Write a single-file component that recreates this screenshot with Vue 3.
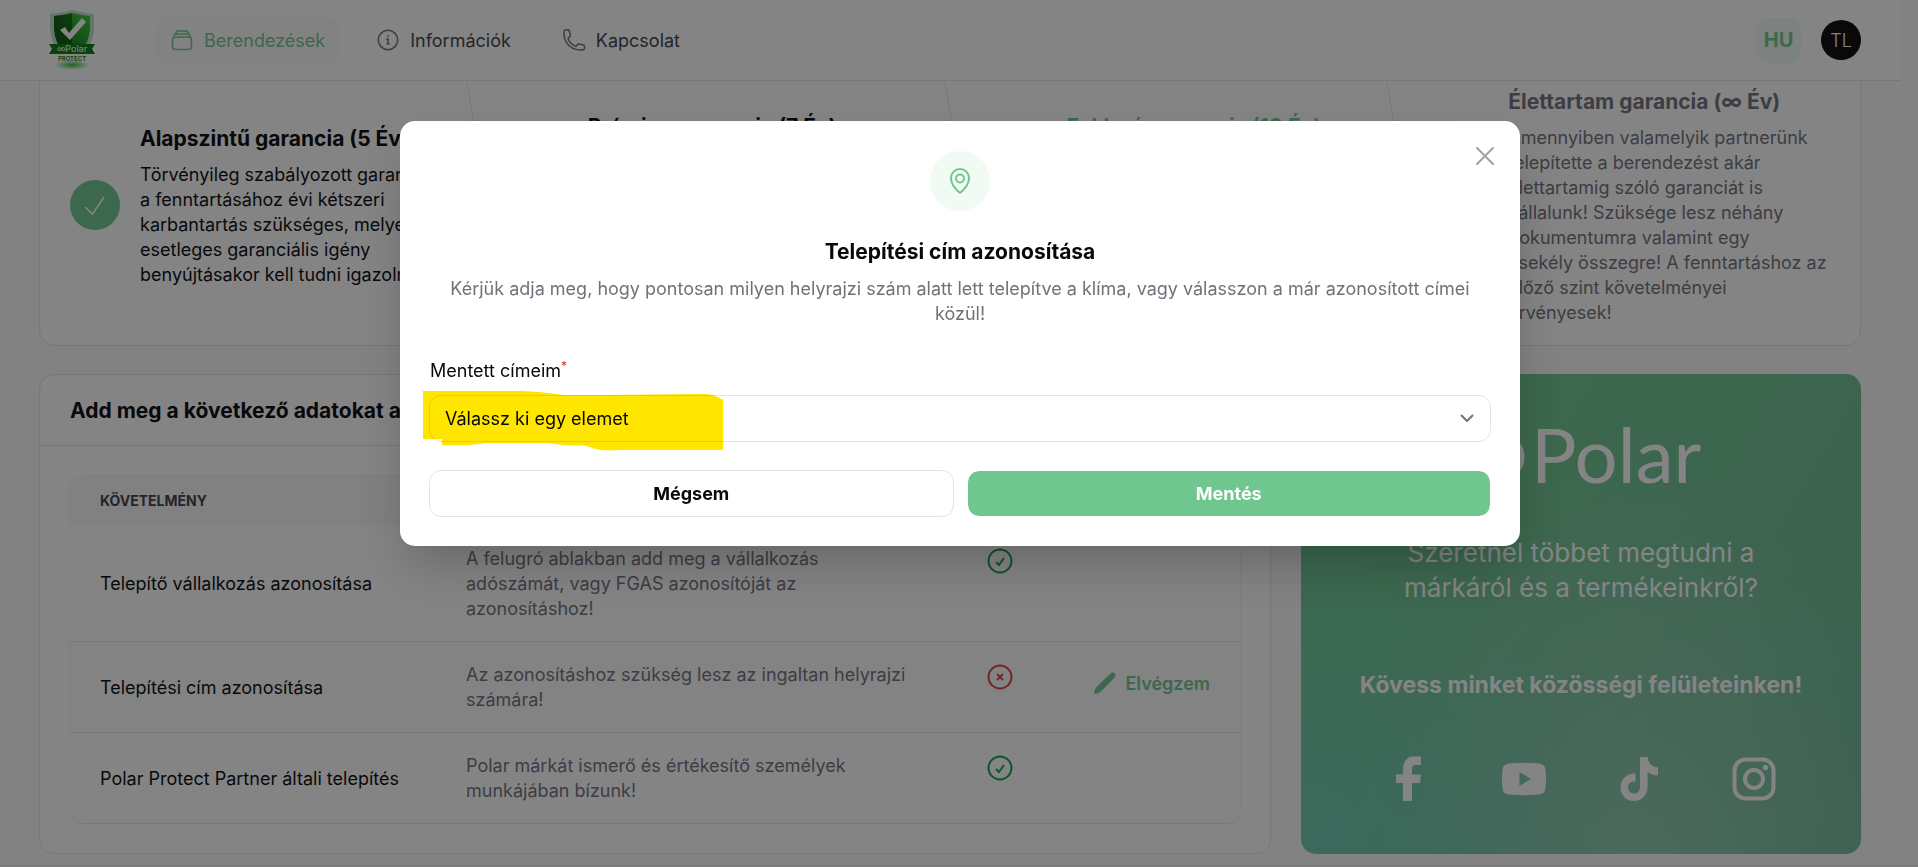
<template>
  <div class="page">
    <header class="topbar">
      <a class="brand" href="#" aria-label="Polar Protect">
        <svg width="52" height="60" viewBox="0 0 52 60">
          <defs>
            <linearGradient id="shieldFill" x1="0" x2="1" y1="1" y2="0">
              <stop offset="0" stop-color="#005a00" />
              <stop offset="1" stop-color="#3ccf3c" />
            </linearGradient>
            <radialGradient id="glow">
              <stop offset="0" stop-color="#37c437" />
              <stop offset="1" stop-color="#37c437" stop-opacity="0" />
            </radialGradient>
          </defs>
          <ellipse cx="26" cy="55" rx="18" ry="5" fill="url(#glow)" />
          <path d="M4 4Q15 3 26 0Q37 3 48 4V19Q47 33 38 43H14Q5 33 4 19Z" fill="#bfe3c6" />
          <path d="M8 6Q18 5 26 3Q34 5 44 6V19Q43 33 34 43H18Q9 33 8 19Z" fill="url(#shieldFill)" />
          <path d="M8 6Q18 5 26 3V43H18Q9 33 8 19Z" fill="#003c00" opacity=".55" />
          <path d="M14 20L19 17L23 23L36 8L40 12L24 30Z" fill="#fff" />
          <path d="M3 34H49L46 39L49 44H3L6 39Z" fill="#067a0c" />
          <text x="26" y="42" text-anchor="middle" class="brand-name">∞Polar</text>
          <text x="26" y="51" text-anchor="middle" class="brand-sub">PROTECT</text>
        </svg>
      </a>
      <nav class="nav">
        <a class="nav-item active" href="#">
          <svg class="nav-icon" viewBox="0 0 24 24">
            <rect x="2.5" y="9" width="19" height="12.5" rx="3" />
            <path d="M4 9V8Q4 6 6 6H18Q20 6 20 8V9M6 6V5Q6 3 8 3H16Q18 3 18 5V6" />
          </svg>
          Berendezések
        </a>
        <a class="nav-item" href="#">
          <svg class="nav-icon" viewBox="0 0 24 24">
            <circle cx="12" cy="12" r="9.7" />
            <path d="M10.5 11H12.2L11.5 16H13.2M12 7.6V8.2" />
          </svg>
          Információk
        </a>
        <a class="nav-item" href="#">
          <svg class="nav-icon" viewBox="0 0 24 24">
            <path d="M2 5.5C2 15 9 22 18.500 22H20.500A2 2 0 0 0 22.500 20V18.300C22.500 17.700 22.100 17.200 21.500 17L17 15.900C16.500 15.800 16 16 15.700 16.400L14.700 17.700C14.400 18.100 13.900 18.200 13.500 18.100A12 12 0 0 1 6.200 10.800C6 10.400 6.200 9.900 6.600 9.600L7.900 8.600C8.300 8.300 8.500 7.800 8.400 7.300L7.300 2.800C7.200 2.200 6.600 1.800 6 1.800H4.300A2.200 2.200 0 0 0 2 4Z" />
          </svg>
          Kapcsolat
        </a>
      </nav>
      <div class="account">
        <button class="lang" type="button">HU</button>
        <button class="avatar" type="button">TL</button>
      </div>
    </header>

    <main class="content">
      <ol class="levels">
        <li v-for="(level, index) in levels" :key="level.title" class="level" :class="level.state">
          <span class="level-mark">
            <svg v-if="level.done" width="24" height="24" viewBox="0 0 24 24">
              <path d="M2 14L9.500 21L21 4" />
            </svg>
          </span>
          <div>
            <h3 class="level-title">{{ level.title }}</h3>
            <p class="level-text">{{ level.text }}</p>
          </div>
          <svg
            v-if="index < levels.length - 1"
            class="level-arrow"
            viewBox="0 0 24 282"
            preserveAspectRatio="none"
          >
            <path d="M0 0L23 141L0 282" />
          </svg>
        </li>
      </ol>

      <div class="columns">
        <section class="card">
          <h2 class="card-title">Add meg a következő adatokat a garancia eléréséhez</h2>
          <div class="table-wrap">
            <table class="table">
              <colgroup>
                <col class="col-name" />
                <col class="col-text" />
                <col class="col-status" />
                <col />
              </colgroup>
              <thead>
                <tr>
                  <th>KÖVETELMÉNY</th>
                  <th>LEÍRÁS</th>
                  <th></th>
                  <th></th>
                </tr>
              </thead>
              <tbody>
                <tr v-for="row in rows" :key="row.name">
                  <td class="name">{{ row.name }}</td>
                  <td class="text">{{ row.text }}</td>
                  <td class="status">
                    <svg :class="row.ok ? 'ok' : 'bad'" width="26" height="26" viewBox="0 0 26 26">
                      <circle cx="13" cy="13" r="11.500" />
                      <path v-if="row.ok" d="M9 14L12 17L17 10" />
                      <path v-else d="M10 10L16 16M16 10L10 16" />
                    </svg>
                  </td>
                  <td class="action">
                    <button v-if="!row.ok" class="link-button" type="button">
                      <svg width="22" height="22" viewBox="0 0 22 22">
                        <path d="M0 22Q0 18 2 15.500L16.500 1.500Q18.500 -0.500 20.500 1.500Q22.500 3.500 20.500 5.500L7 19.500Q4.500 21.500 0 22Z" />
                      </svg>
                      Elvégzem
                    </button>
                  </td>
                </tr>
              </tbody>
            </table>
          </div>
        </section>

        <aside class="promo">
          <svg class="promo-logo" width="242" height="64" viewBox="0 0 242 64">
            <ellipse cx="19" cy="36" rx="14" ry="17" />
            <ellipse cx="47" cy="36" rx="14" ry="17" />
            <text x="71" y="62">Polar</text>
          </svg>
          <p class="promo-text">Szeretnél többet megtudni a<br />márkáról és a termékeinkről?</p>
          <p class="promo-follow">Kövess minket közösségi felületeinken!</p>
          <div class="socials">
            <a href="#" aria-label="Facebook">
              <svg viewBox="0 0 48 48">
                <path d="M18 46V28H11V19.500H18V15C18 6 22 1.500 29 1.500H36V10H31C28 10 27 11.500 27 14.500V19.500H36L35 28H27V46Z" />
              </svg>
            </a>
            <a href="#" aria-label="YouTube">
              <svg viewBox="0 0 48 48">
                <path fill-rule="evenodd" d="M9 8.500Q24 7 39 8.500Q45 9 45.500 15Q46.500 24 45.500 33Q45 39 39 39.500Q24 41 9 39.500Q3 39 2.500 33Q1.500 24 2.500 15Q3 9 9 8.500ZM19.500 17V31L31 24Z" />
              </svg>
            </a>
            <a href="#" aria-label="TikTok">
              <svg viewBox="0 0 48 48">
                <path d="M25 2H32.500C33 8 37 12 43 12.500V20.500C39 20.500 35.500 19 32.500 17V32C32.500 40 26.500 46 19 46C11 46 5.500 40 5.500 32.500C5.500 24.500 12 18 20.500 18.500V26.500C16 26 13 28.500 13 32.300C13 36 15.500 38.500 19 38.500C22.500 38.500 25 36 25 32Z" />
              </svg>
            </a>
            <a href="#" aria-label="Instagram">
              <svg viewBox="0 0 48 48">
                <rect class="line" x="4.500" y="4.500" width="39" height="39" rx="11" />
                <circle class="line" cx="24" cy="24" r="9" />
                <circle cx="35.500" cy="12.500" r="2.800" />
              </svg>
            </a>
          </div>
        </aside>
      </div>
    </main>
    <footer class="footer"></footer>

    <div class="backdrop">
      <form class="modal" role="dialog" aria-labelledby="modal-title" @submit.prevent>
        <button class="close" type="button" aria-label="Bezárás">
          <svg width="18" height="18" viewBox="0 0 18 18">
            <path d="M1 1L17 17M17 1L1 17" />
          </svg>
        </button>
        <span class="modal-icon">
          <svg width="26" height="26" viewBox="0 0 26 26">
            <path d="M13 25C10 22.500 4 17 4 10A9 9 0 0 1 22 10C22 17 16 22.500 13 25Z" />
            <circle cx="13" cy="10.500" r="4" />
          </svg>
        </span>
        <h2 id="modal-title" class="modal-title">Telepítési cím azonosítása</h2>
        <p class="modal-text">
          Kérjük adja meg, hogy pontosan milyen helyrajzi szám alatt lett telepítve a klíma, vagy válasszon a már azonosított címei közül!
        </p>
        <label class="field-label" for="address">Mentett címeim<sup>*</sup></label>
        <div class="field">
          <select id="address" v-model="address">
            <option value="">Válassz ki egy elemet</option>
          </select>
          <svg class="chevron" width="14" height="8" viewBox="0 0 14 8">
            <path d="M1 1L7 7L13 1" />
          </svg>
          <svg class="marker" width="300" height="60" viewBox="0 0 300 60">
            <path d="M0 0H100Q122 1 141 4H181L280 3Q292 3 300 9V59H198Q180 60 173 58C166 56 164 54 153 54.500Q138 54 123 52H63Q50 54 41 54H19V48H0Z" />
          </svg>
        </div>
        <div class="modal-actions">
          <button class="btn btn-outline" type="button">Mégsem</button>
          <button class="btn btn-primary" type="submit">Mentés</button>
        </div>
      </form>
    </div>
  </div>
</template>

<script setup>
import { ref } from 'vue'

const address = ref('')

const levels = [
  {
    title: 'Alapszintű garancia (5 Év)',
    text: 'Törvényileg szabályozott garancia,\na fenntartásához évi kétszeri\nkarbantartás szükséges, melyet\nesetleges garanciális igény\nbenyújtásakor kell tudni igazolni!',
    state: 'done',
    done: true,
  },
  {
    title: 'Prémium garancia (7 Év)',
    text: 'Amennyiben minden adatot\nmegad a berendezésről,\nkét évvel hosszabb\ngaranciát vállalunk.\nA fenntartáshoz az előző szint\nkövetelményei érvényesek!',
    state: 'done',
    done: true,
  },
  {
    title: 'Exkluzív garancia (10 Év)',
    text: 'Amennyiben partnerünk\ntelepítette a berendezést,\ntíz év garanciát\nvállalunk.\nA fenntartáshoz az előző szint\nkövetelményei érvényesek!',
    state: 'current',
    done: false,
  },
  {
    title: 'Élettartam garancia (∞ Év)',
    text: 'Amennyiben valamelyik partnerünk\ntelepítette a berendezést akár\nélettartamig szóló garanciát is\nvállalunk! Szüksége lesz néhány\ndokumentumra valamint egy\ncsekély összegre! A fenntartáshoz az\nelőző szint követelményei\nérvényesek!',
    state: 'upcoming',
    done: false,
  },
]

const rows = [
  {
    name: 'Telepítő vállalkozás azonosítása',
    text: 'A felugró ablakban add meg a vállalkozás\nadószámát, vagy FGAS azonosítóját az\nazonosításhoz!',
    ok: true,
  },
  {
    name: 'Telepítési cím azonosítása',
    text: 'Az azonosításhoz szükség lesz az ingaltan helyrajzi\nszámára!',
    ok: false,
  },
  {
    name: 'Polar Protect Partner általi telepítés',
    text: 'Polar márkát ismerő és értékesítő személyek\nmunkájában bízunk!',
    ok: true,
  },
]
</script>

<style>
body {
  margin: 0;
  overflow: hidden;
  background: #fafafa;
}
</style>

<style scoped>
.page {
  box-sizing: border-box;
  min-height: 100vh;
  padding-right: 17px;
  background: #fafafa;
  color: #09090b;
  font-family: Inter, sans-serif;
  font-size: 18px;
  line-height: 25px;
}
.page *,
.page *::before {
  box-sizing: border-box;
}
h2,
h3,
p,
ol {
  margin: 0;
  padding: 0;
}
a {
  color: inherit;
  text-decoration: none;
}
button,
select {
  font: inherit;
  color: inherit;
  cursor: pointer;
}
svg {
  display: block;
  flex-shrink: 0;
}

/* top bar */
.topbar {
  position: fixed;
  top: 0;
  left: 0;
  right: 17px;
  z-index: 10;
  display: flex;
  align-items: center;
  height: 81px;
  padding: 0 40px 0 46px;
  background: #fff;
  border-bottom: 1px solid #e4e4e7;
}
.brand-name {
  fill: #fff;
  font-size: 9px;
}
.brand-sub {
  fill: #067a0c;
  font-size: 6px;
  font-weight: 600;
}
.nav {
  display: flex;
  gap: 21px;
  margin-left: 57px;
}
.nav-item {
  display: flex;
  align-items: center;
  gap: 10px;
  height: 45px;
  padding: 0 15px;
  border-radius: 12px;
  color: #3f3f46;
}
.nav-icon {
  width: 24px;
  height: 24px;
  fill: none;
  stroke: #71717a;
  stroke-width: 1.5;
  stroke-linecap: round;
  stroke-linejoin: round;
}
.nav-item.active {
  background: #fafafa;
  color: #6fc78f;
}
.nav-item.active .nav-icon {
  stroke: #6fc78f;
}
.account {
  display: flex;
  align-items: center;
  gap: 20px;
  margin-left: auto;
}
.lang {
  width: 45px;
  height: 45px;
  padding: 0;
  border: 0;
  border-radius: 12px;
  background: #eefaf2;
  color: #6fc78f;
  font-size: 20px;
  font-weight: 700;
}
.avatar {
  width: 40px;
  height: 40px;
  padding: 0;
  border: 0;
  border-radius: 50%;
  background: #09090b;
  color: #fff;
  font-weight: 300;
}

/* warranty levels */
.content {
  padding: 63px 40px 11px 39px;
}
.levels {
  display: grid;
  grid-template-columns: 448fr 479fr 442fr 452fr;
  min-height: 283px;
  list-style: none;
  background: #fff;
  border: 1px solid #e4e4e7;
  border-radius: 15px;
}
.level {
  position: relative;
  display: flex;
  align-items: center;
  gap: 20px;
  padding: 20px 0 20px 30px;
}
.level-mark {
  display: flex;
  flex-shrink: 0;
  align-items: center;
  justify-content: center;
  width: 50px;
  height: 50px;
  border: 2px solid #d4d4d8;
  border-radius: 50%;
}
.level-mark path {
  fill: none;
  stroke: #fff;
  stroke-width: 1.5;
}
.done .level-mark {
  border-color: #6fc78f;
  background: #6fc78f;
}
.level-title {
  margin-bottom: 8px;
  padding-top: 2px;
  font-size: 21px;
  font-weight: 700;
  line-height: 30px;
  white-space: nowrap;
}
.level-text {
  white-space: pre;
}
.current .level-title {
  color: #6fc78f;
}
.upcoming {
  color: #71717a;
}
.level-arrow {
  position: absolute;
  top: 0;
  right: 0;
  width: 24px;
  height: 100%;
}
.level-arrow path {
  fill: none;
  stroke: #e4e4e7;
}

/* requirements */
.columns {
  display: grid;
  grid-template-columns: 11fr 5fr;
  gap: 30px;
  margin-top: 28px;
}
.card {
  background: #fff;
  border: 1px solid #e4e4e7;
  border-radius: 15px;
}
.card-title {
  padding: 21px 30px 19px;
  border-bottom: 1px solid #e4e4e7;
  font-size: 21px;
  font-weight: 700;
  line-height: 30px;
}
.table-wrap {
  margin: 29px;
  overflow: hidden;
  border: 1px solid #f4f4f5;
  border-bottom-color: #e4e4e7;
  border-radius: 15px;
}
.table {
  width: 100%;
  border-collapse: collapse;
  table-layout: fixed;
}
.col-name {
  width: 366px;
}
.col-text {
  width: 521px;
}
.col-status {
  width: 90px;
}
th {
  height: 50px;
  padding: 0 30px 2px;
  background: #f8f8f9;
  color: #3f3f46;
  font-size: 14px;
  font-weight: 700;
  text-align: left;
}
td {
  padding: 20px 30px;
  vertical-align: top;
}
tbody tr + tr td {
  border-top: 1px solid #e4e4e7;
}
tbody tr:nth-child(even) {
  background: #fcfcfd;
}
.name {
  padding-right: 0;
  vertical-align: middle;
}
.text {
  padding-right: 0;
  color: #71717a;
  white-space: pre-line;
}
.status {
  padding: 22px 30px;
}
.status svg {
  fill: none;
  stroke-width: 2;
}
.ok {
  stroke: #16a34a;
}
.bad {
  stroke: #dc4446;
}
.action {
  padding-left: 0;
}
.link-button {
  display: flex;
  align-items: center;
  gap: 9px;
  height: 42px;
  margin-left: auto;
  padding: 0;
  border: 0;
  background: none;
  color: #6fc78f;
  font-weight: 600;
}
.link-button svg {
  fill: #6fc78f;
}

/* promo card */
.promo {
  display: flex;
  flex-direction: column;
  align-items: center;
  padding: 47px 20px 30px;
  border-radius: 15px;
  background:
    radial-gradient(circle at 0% 100%, rgba(107, 203, 195, 0.6) 0%, rgba(107, 203, 195, 0) 45%),
    radial-gradient(ellipse at 60% 110%, #90cab0 0%, rgba(144, 202, 176, 0) 60%),
    linear-gradient(120deg, #6fc78f 30%, #6db695 100%);
  color: #fff;
  text-align: center;
}
.promo-logo {
  overflow: visible;
}
.promo-logo ellipse {
  fill: none;
  stroke: #fff;
  stroke-width: 7;
}
.promo-logo text {
  fill: #fff;
  font-family: Lato, sans-serif;
  font-size: 76px;
}
.promo-text {
  margin-top: 50px;
  font-size: 26px;
  line-height: 35px;
}
.promo-follow {
  margin-top: 65px;
  font-size: 23px;
  font-weight: 700;
  line-height: 30px;
}
.socials {
  display: flex;
  gap: 67px;
  margin-top: 55px;
}
.socials svg {
  width: 48px;
  height: 48px;
  fill: #fff;
}
.socials .line {
  fill: none;
  stroke: #fff;
  stroke-width: 4;
}
.footer {
  margin-right: -17px;
  border-top: 1px solid #e4e4e7;
}

/* modal */
.backdrop {
  position: fixed;
  inset: 0;
  z-index: 20;
  display: flex;
  align-items: flex-start;
  justify-content: center;
  padding: 121px 20px 20px 22px;
  background: rgba(9, 9, 11, 0.5);
}
.modal {
  position: relative;
  display: flex;
  flex-direction: column;
  width: 100%;
  max-width: 1120px;
  padding: 30px 29px 29px;
  border-radius: 15px;
  background: #fff;
  box-shadow: 0 25px 50px -12px rgba(0, 0, 0, 0.25);
}
.close {
  position: absolute;
  top: 26px;
  right: 26px;
  padding: 0;
  border: 0;
  background: none;
}
.close path {
  stroke: #a1a1aa;
  stroke-width: 2;
  stroke-linecap: round;
}
.modal-icon {
  display: flex;
  align-items: center;
  align-self: center;
  justify-content: center;
  width: 60px;
  height: 60px;
  border-radius: 50%;
  background: #f1fbf4;
}
.modal-icon svg {
  fill: none;
  stroke: #6fc78f;
  stroke-width: 2;
}
.modal-title {
  margin-top: 26px;
  font-size: 21px;
  font-weight: 700;
  line-height: 30px;
  text-align: center;
}
.modal-text {
  margin-top: 9px;
  color: #71717a;
  text-align: center;
}
.field-label {
  margin: 32px 1px 12px;
}
.field-label sup {
  color: #dc2626;
  font-size: 12px;
  line-height: 0;
}
.field {
  position: relative;
}
.field select {
  display: block;
  width: 100%;
  height: 47px;
  padding: 0 40px 0 15px;
  border: 1px solid #e4e4e7;
  border-radius: 12px;
  background: #fff;
  appearance: none;
}
.chevron {
  position: absolute;
  top: 19px;
  right: 17px;
  pointer-events: none;
}
.chevron path {
  fill: none;
  stroke: #6b7280;
  stroke-width: 2;
}
.marker {
  position: absolute;
  top: -4px;
  left: -6px;
  mix-blend-mode: multiply;
  pointer-events: none;
}
.marker path {
  fill: #ffe600;
}
.modal-actions {
  display: grid;
  grid-template-columns: 1fr 1fr;
  gap: 13px;
  margin-top: 28px;
}
.btn {
  height: 47px;
  border: 1px solid #e4e4e7;
  border-radius: 12px;
  background: #fff;
  font-weight: 700;
}
.btn-primary {
  border-color: #fff;
  background: #6fc78f;
  background-clip: padding-box;
  color: #fff;
}
</style>
